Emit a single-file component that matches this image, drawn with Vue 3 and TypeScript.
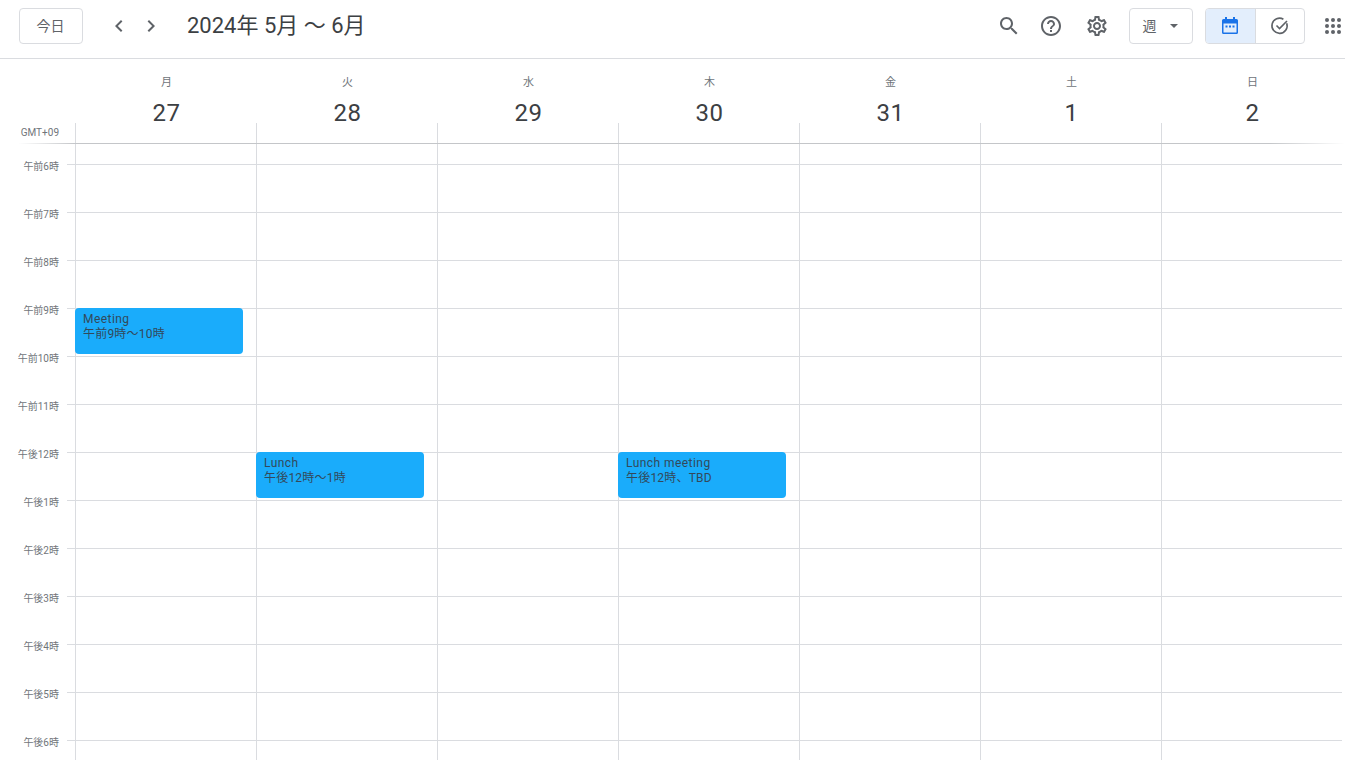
<script setup lang="ts">
interface CalEvent {
  title: string
  time: string
}

const days = [
  { label: '月', date: 27 },
  { label: '火', date: 28 },
  { label: '水', date: 29 },
  { label: '木', date: 30 },
  { label: '金', date: 31 },
  { label: '土', date: 1 },
  { label: '日', date: 2 },
]

const hours = [
  '午前6時', '午前7時', '午前8時', '午前9時', '午前10時', '午前11時', '午後12時',
  '午後1時', '午後2時', '午後3時', '午後4時', '午後5時', '午後6時',
]

// key: `${dayIndex}-${hourIndex}`
const events: Record<string, CalEvent> = {
  '0-3': { title: 'Meeting', time: '午前9時〜10時' },
  '1-6': { title: 'Lunch', time: '午後12時〜1時' },
  '3-6': { title: 'Lunch meeting', time: '午後12時、TBD' },
}
</script>

<template>
  <div class="page">
    <header class="toolbar">
      <button class="btn today">今日</button>
      <button class="nav">
        <svg class="glyph" viewBox="0 0 24 24" width="24" height="24"><path d="M15.41 7.41 14 6l-6 6 6 6 1.41-1.41L10.83 12z" /></svg>
      </button>
      <button class="nav">
        <svg class="glyph" viewBox="0 0 24 24" width="24" height="24"><path d="M8.59 16.59 10 18l6-6-6-6-1.41 1.41L13.17 12z" /></svg>
      </button>
      <h1 class="title">2024年 5月 〜 6月</h1>

      <div class="tools">
        <button class="icon search">
          <svg class="glyph" viewBox="0 0 24 24" width="24" height="24"><path d="M15.5 14h-.79l-.28-.27C15.41 12.59 16 11.11 16 9.5 16 5.91 13.09 3 9.5 3S3 5.91 3 9.5 5.91 16 9.5 16c1.61 0 3.09-.59 4.23-1.57l.27.28v.79l5 4.99L20.49 19l-4.99-5zm-6 0C7.01 14 5 11.99 5 9.5S7.01 5 9.5 5 14 7.01 14 9.5 11.99 14 9.5 14z" /></svg>
        </button>
        <button class="icon help">
          <svg class="glyph" viewBox="0 0 24 24" width="24" height="24"><path d="M11 18h2v-2h-2v2zm1-16C6.48 2 2 6.48 2 12s4.48 10 10 10 10-4.48 10-10S17.52 2 12 2zm0 18c-4.41 0-8-3.59-8-8s3.59-8 8-8 8 3.59 8 8-3.59 8-8 8zm0-14c-2.21 0-4 1.79-4 4h2c0-1.1.9-2 2-2s2 .9 2 2c0 2-3 1.75-3 5h2c0-2.25 3-2.5 3-5 0-2.21-1.79-4-4-4z" /></svg>
        </button>
        <button class="icon settings">
          <svg class="glyph" viewBox="0 0 24 24" width="24" height="24"><path d="M19.43 12.98c.04-.32.07-.64.07-.98 0-.34-.03-.66-.07-.98l2.11-1.65c.19-.15.24-.42.12-.64l-2-3.46c-.09-.16-.26-.25-.44-.25-.06 0-.12.01-.17.03l-2.49 1c-.52-.4-1.08-.73-1.69-.98l-.38-2.65C14.46 2.18 14.25 2 14 2h-4c-.25 0-.46.18-.49.42l-.38 2.65c-.61.25-1.17.59-1.69.98l-2.49-1c-.06-.02-.12-.03-.18-.03-.17 0-.34.09-.43.25l-2 3.46c-.13.22-.07.49.12.64l2.11 1.65c-.04.32-.07.65-.07.98 0 .33.03.66.07.98l-2.11 1.65c-.19.15-.24.42-.12.64l2 3.46c.09.16.26.25.44.25.06 0 .12-.01.17-.03l2.49-1c.52.4 1.08.73 1.69.98l.38 2.65c.03.24.24.42.49.42h4c.25 0 .46-.18.49-.42l.38-2.65c.61-.25 1.17-.59 1.69-.98l2.49 1c.06.02.12.03.18.03.17 0 .34-.09.43-.25l2-3.46c.12-.22.07-.49-.12-.64l-2.11-1.65zm-1.98-1.71c.04.31.05.52.05.73 0 .21-.02.43-.05.73l-.14 1.13.89.7 1.08.84-.7 1.21-1.27-.51-1.04-.42-.9.68c-.43.32-.84.56-1.25.73l-1.06.43-.16 1.13-.2 1.35h-1.4l-.19-1.35-.16-1.13-1.06-.43c-.43-.18-.83-.41-1.23-.71l-.91-.7-1.06.43-1.27.51-.7-1.21 1.08-.84.89-.7-.14-1.13c-.03-.31-.05-.54-.05-.74s.02-.43.05-.73l.14-1.13-.89-.7-1.08-.84.7-1.21 1.27.51 1.04.42.9-.68c.43-.32.84-.56 1.25-.73l1.06-.43.16-1.13.2-1.35h1.39l.19 1.35.16 1.13 1.06.43c.43.18.83.41 1.23.71l.91.7 1.06-.43 1.27-.51.7 1.21-1.07.85-.89.7.14 1.13zM12 8c-2.21 0-4 1.79-4 4s1.79 4 4 4 4-1.79 4-4-1.79-4-4-4zm0 6c-1.1 0-2-.9-2-2s.9-2 2-2 2 .9 2 2-.9 2-2 2z" /></svg>
        </button>

        <button class="btn view">
          <span class="view-label">週</span>
          <svg class="glyph" viewBox="0 0 10 5" width="8" height="4"><path d="M0 0h10L5 5z" /></svg>
        </button>

        <div class="toggle">
          <button class="toggle-item active">
            <svg class="cal" viewBox="0 0 18 20" width="18" height="20">
              <path d="M4 1h2v3H4zM12 1h2v3h-2z" />
              <path fill-rule="evenodd" d="M2.500 3h13A1.500 1.500 0 0 1 17 4.500v12a1.500 1.500 0 0 1-1.500 1.500h-13A1.500 1.500 0 0 1 1 16.500v-12A1.500 1.500 0 0 1 2.500 3zM2.500 7.500v9h13v-9z" />
              <path d="M4.500 9.500h2v2h-2zM8 9.500h2v2H8zM11.500 9.500h2v2h-2z" />
            </svg>
          </button>
          <button class="toggle-item">
            <svg class="task" viewBox="0 0 20 20" width="20" height="20">
              <path d="M16.700 7.200A7.600 7.600 0 1 1 13.400 3.200" />
              <path d="M6.500 9.500l3 3 7.500-7.500" />
            </svg>
          </button>
        </div>

        <button class="apps">
          <svg class="glyph" viewBox="0 0 16 16" width="16" height="16">
            <template v-for="r in 3" :key="r">
              <circle v-for="c in 3" :key="c" :cx="2 + (c - 1) * 6" :cy="2 + (r - 1) * 6" r="2" />
            </template>
          </svg>
        </button>
      </div>
    </header>

    <div class="day-head">
      <div v-for="d in days" :key="d.label + d.date" class="day">
        <div class="weekday">{{ d.label }}</div>
        <div class="date">{{ d.date }}</div>
      </div>
    </div>

    <div class="allday">
      <div class="gmt">GMT+09</div>
      <div v-for="d in days" :key="d.label" class="allday-cell"></div>
    </div>
    <div class="allday-rule"></div>

    <div class="spacer">
      <div v-for="d in days" :key="d.label" class="spacer-cell"></div>
    </div>

    <div v-for="(h, hi) in hours" :key="h" class="row">
      <div class="hour">{{ h }}</div>
      <div class="tick"></div>
      <div v-for="(d, di) in days" :key="d.label" class="cell">
        <div v-if="events[`${di}-${hi}`]" class="event">
          <div class="event-title">{{ events[`${di}-${hi}`].title }}</div>
          <div class="event-time">{{ events[`${di}-${hi}`].time }}</div>
        </div>
      </div>
    </div>
  </div>
</template>

<style>
html,
body {
  margin: 0;
  background: #fff;
  overflow: hidden;
}
</style>

<style scoped>
.page {
  width: 1345px;
  height: 760px;
  overflow: hidden;
  background: #fff;
  color: #3c4043;
  font-family: Roboto, 'Noto Sans CJK JP', sans-serif;
}

button {
  padding: 0;
  border: 0;
  background: none;
  font: inherit;
  color: inherit;
  display: flex;
  align-items: center;
  justify-content: center;
}

svg {
  display: block;
}

.glyph {
  fill: #5f6368;
}

.cal {
  fill: #1a73e8;
}

.task {
  fill: none;
  stroke: #5f6368;
  stroke-width: 1.6;
}

.toolbar {
  display: flex;
  align-items: center;
  height: 52px;
  padding: 0 0 6px 19px;
  border-bottom: 1px solid #dadce0;
}

.btn {
  height: 36px;
  box-sizing: border-box;
  border: 1px solid #dadce0;
  border-radius: 4px;
  font-size: 14px;
  color: #5f6368;
}

.today {
  width: 64px;
  margin-right: 20px;
  padding: 0 1px 2px 0;
}

.nav {
  width: 32px;
  height: 32px;
}

.title {
  margin: 0 0 0 20px;
  font-size: 22px;
  font-weight: 400;
  line-height: 28px;
  color: #3c4043;
}

.tools {
  display: flex;
  align-items: center;
  margin-left: auto;
}

.icon {
  width: 24px;
  height: 24px;
}

.help {
  margin-left: 18px;
}

.settings {
  margin-left: 22px;
}

.view {
  width: 64px;
  margin-left: 20px;
  gap: 13px;
  padding-right: 1px;
}

.view-label {
  margin: -2px 0 0 -1px;
}

.toggle {
  display: flex;
  width: 100px;
  height: 36px;
  margin-left: 12px;
  box-sizing: border-box;
  border: 1px solid #dadce0;
  border-radius: 4px;
  overflow: hidden;
}

.toggle-item {
  flex: 1;
}

.toggle-item.active {
  background: #e3eefc;
  border-right: 1px solid #dadce0;
}

.apps {
  width: 40px;
  height: 24px;
  padding-right: 4px;
  justify-content: flex-end;
}

.day-head {
  display: grid;
  grid-template-columns: repeat(7, 181px);
  height: 64px;
  padding-left: 76px;
}

.day {
  text-align: center;
}

.weekday {
  margin-top: 17px;
  font-size: 11px;
  line-height: 14px;
  color: #70757a;
}

.date {
  margin-top: 9px;
  font-size: 24px;
  line-height: 28px;
  letter-spacing: 0.5px;
  color: #3c4043;
}

.allday {
  display: grid;
  grid-template-columns: 75px repeat(7, 181px);
  height: 20px;
}

.gmt {
  padding: 3px 16px 0 0;
  text-align: right;
  font-size: 10px;
  line-height: 14px;
  color: #70757a;
}

.allday-cell,
.spacer-cell,
.cell {
  border-left: 1px solid #dadce0;
}

.allday-rule {
  height: 1px;
  background: linear-gradient(90deg, transparent 18px, #c4c6c9 75px, #c4c6c9 1270px, transparent 1345px);
}

.spacer {
  display: grid;
  grid-template-columns: repeat(7, 181px);
  height: 20px;
  padding-left: 75px;
}

.row {
  display: grid;
  grid-template-columns: 59px 16px repeat(7, 181px);
  height: 48px;
}

.hour {
  position: relative;
  top: -4px;
  text-align: right;
  font-size: 10px;
  line-height: 14px;
  color: #70757a;
}

.tick {
  margin-left: 8px;
  border-top: 1px solid #dadce0;
}

.cell {
  position: relative;
  border-top: 1px solid #dadce0;
}

.event {
  position: absolute;
  top: -1px;
  left: -1px;
  width: 168px;
  height: 46px;
  box-sizing: border-box;
  padding: 4px 8px;
  border-radius: 4px;
  background: #1aacfb;
  color: #33495a;
  font-size: 12px;
  line-height: 15px;
  z-index: 1;
}

.event-title {
  letter-spacing: 0.45px;
}

.event-time {
  letter-spacing: 0.2px;
}
</style>
